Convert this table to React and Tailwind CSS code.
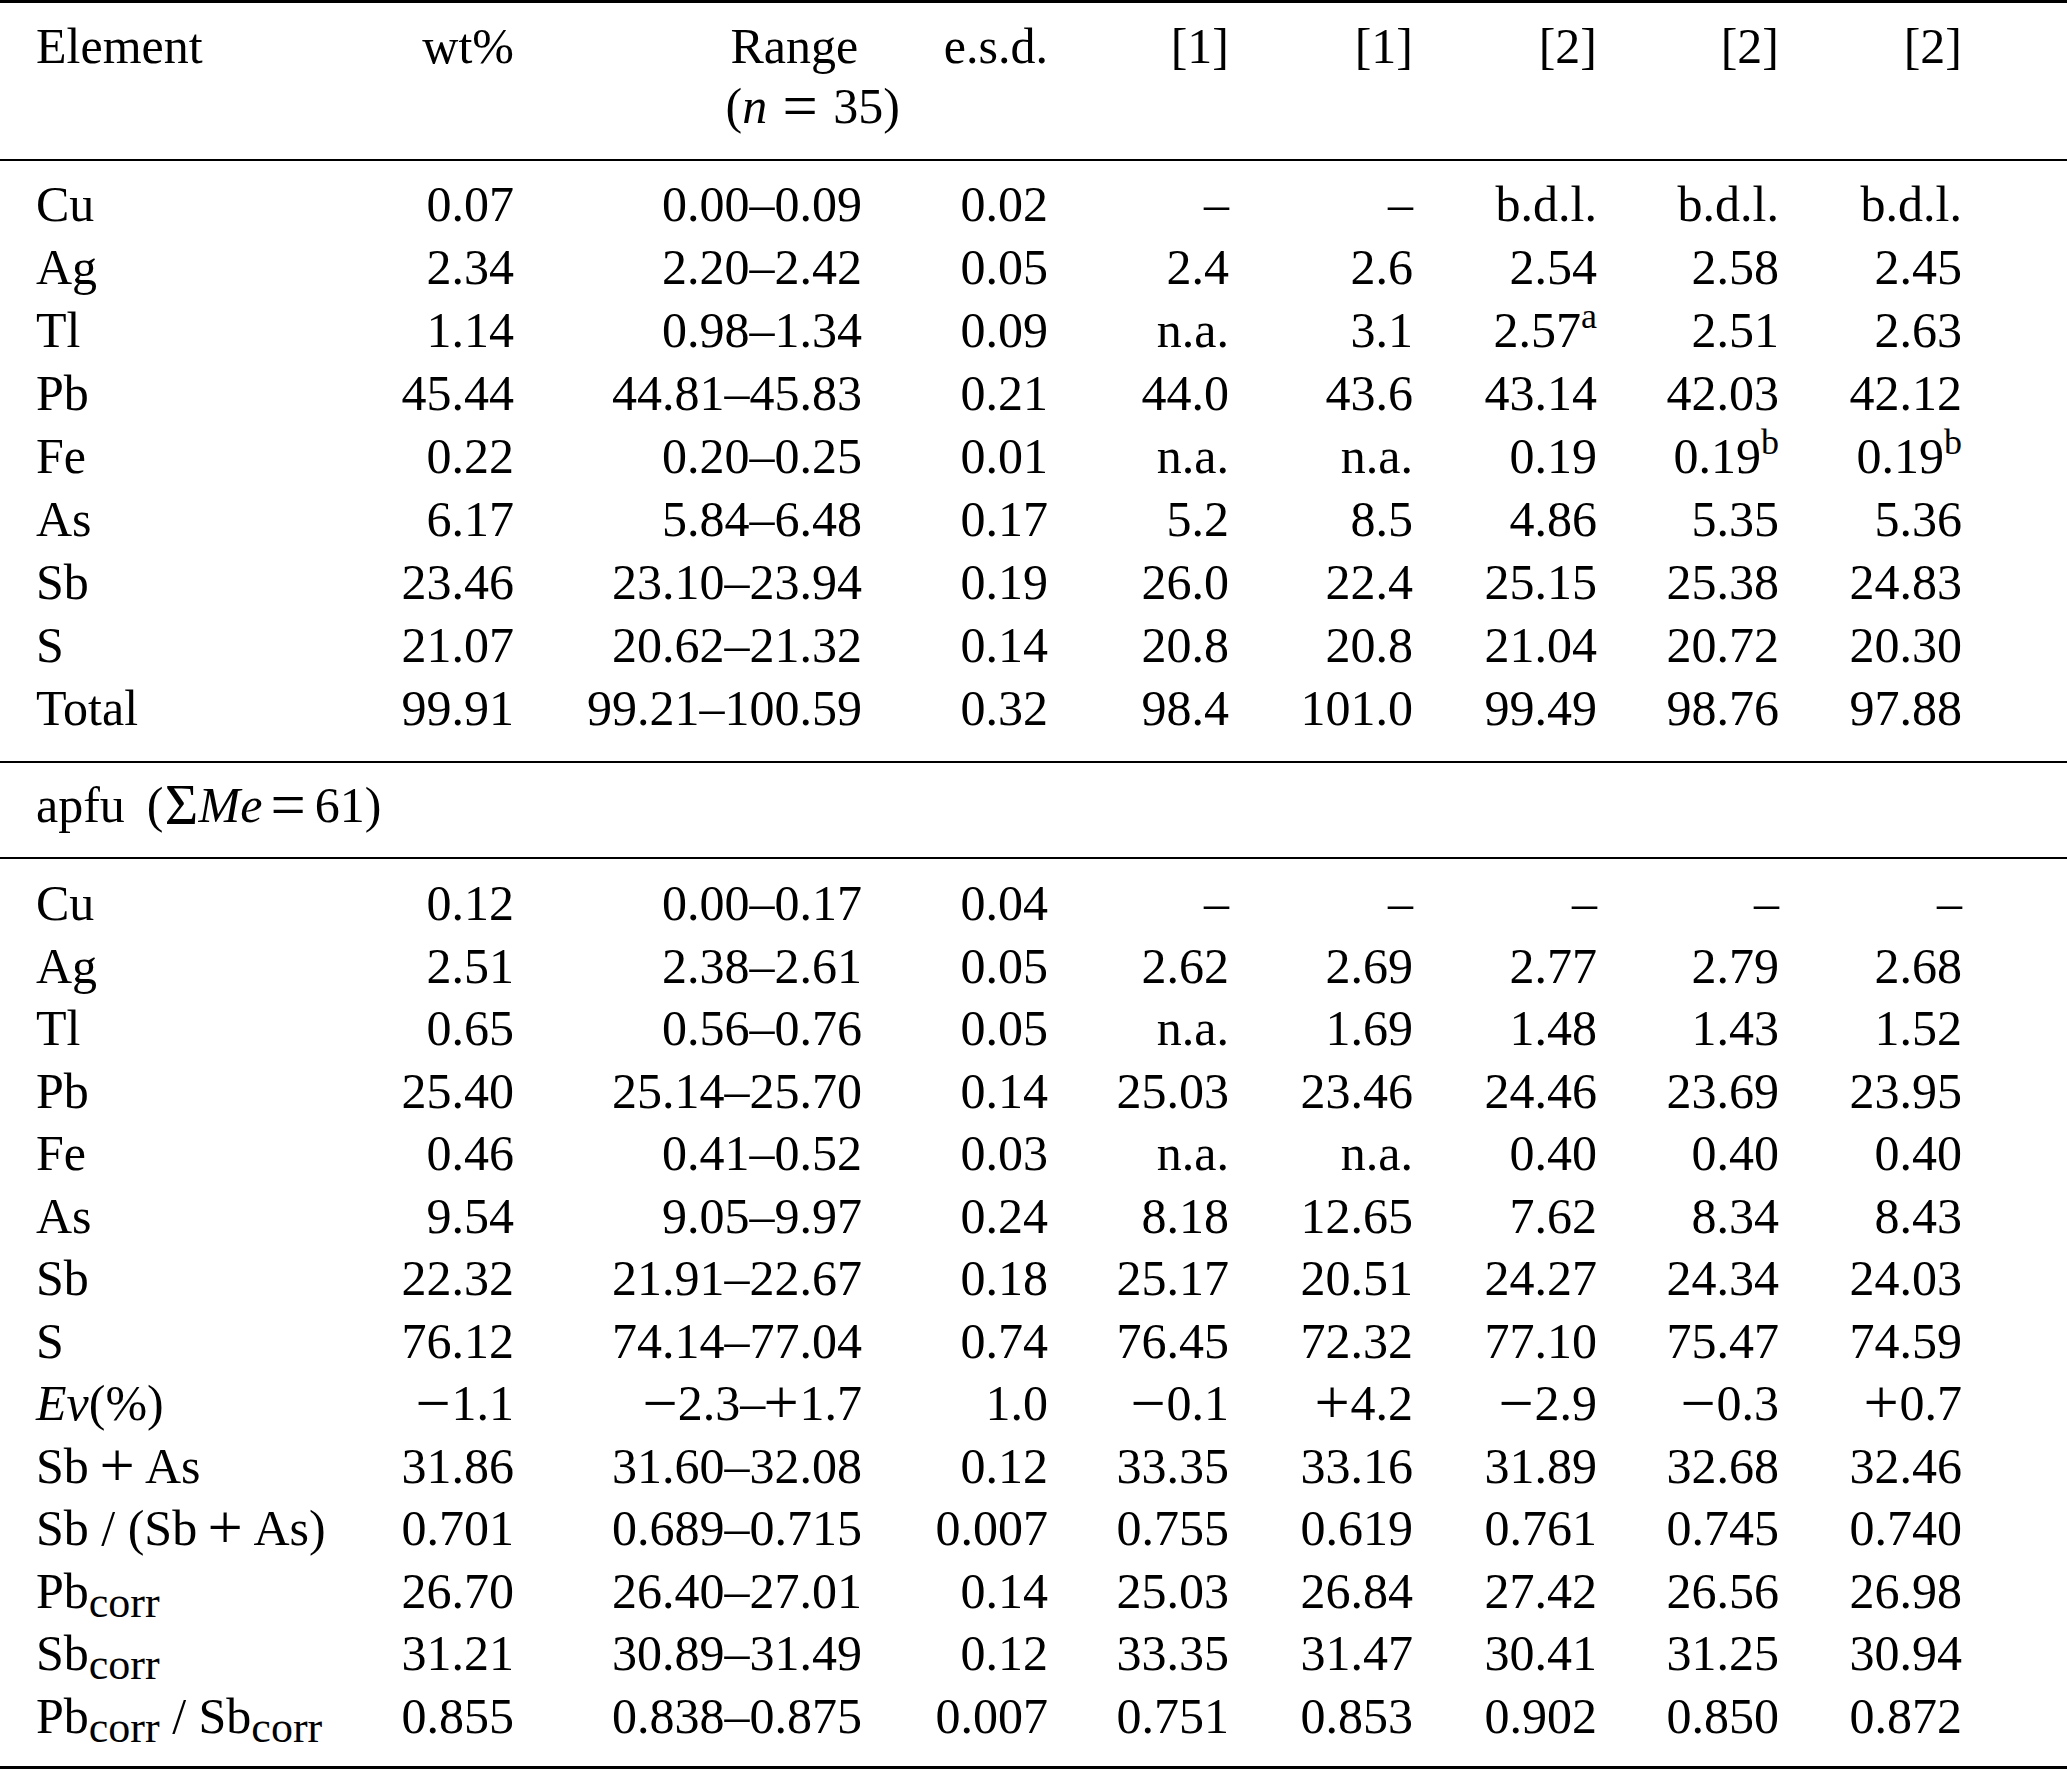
import React from "react";

const cols =
  "grid grid-cols-[330px_184px_348px_186px_181px_184px_184px_182px_183px] whitespace-nowrap";

const Sub = ({ children }) => (
  <sub className="text-[44px] leading-none relative top-[9px] align-baseline">
    {children}
  </sub>
);

const Sup = ({ children }) => (
  <sup className="text-[36px] leading-none relative top-[-19px] align-baseline">
    {children}
  </sup>
);

// math-mode operators are drawn a bit bigger than the text ones
const gaps = {
  unary: "mr-[4px] ml-[2px]",
  bin: "mx-[14px]",
  wide: "mx-[19px]",
  rel: "mx-[12px]",
};
const Op = ({ children, gap = "unary" }) => (
  <span className={`inline-block scale-[1.25] ${gaps[gap]}`}>{children}</span>
);

const Row = ({ label, cells, lh = "leading-[63px]" }) => (
  <div className={`${cols} ${lh}`}>
    <div className="pl-[36px]">{label}</div>
    {cells.map((c, i) => (
      <div key={i} className="text-right">
        {c}
      </div>
    ))}
  </div>
);

const neg = (v) => (
  <>
    <Op>−</Op>
    {v}
  </>
);
const pos = (v) => (
  <>
    <Op>+</Op>
    {v}
  </>
);

const wt = [
  ["Cu", ["0.07", "0.00–0.09", "0.02", "–", "–", "b.d.l.", "b.d.l.", "b.d.l."]],
  ["Ag", ["2.34", "2.20–2.42", "0.05", "2.4", "2.6", "2.54", "2.58", "2.45"]],
  ["Tl", ["1.14", "0.98–1.34", "0.09", "n.a.", "3.1", <>2.57<Sup>a</Sup></>, "2.51", "2.63"]],
  ["Pb", ["45.44", "44.81–45.83", "0.21", "44.0", "43.6", "43.14", "42.03", "42.12"]],
  ["Fe", ["0.22", "0.20–0.25", "0.01", "n.a.", "n.a.", "0.19", <>0.19<Sup>b</Sup></>, <>0.19<Sup>b</Sup></>]],
  ["As", ["6.17", "5.84–6.48", "0.17", "5.2", "8.5", "4.86", "5.35", "5.36"]],
  ["Sb", ["23.46", "23.10–23.94", "0.19", "26.0", "22.4", "25.15", "25.38", "24.83"]],
  ["S", ["21.07", "20.62–21.32", "0.14", "20.8", "20.8", "21.04", "20.72", "20.30"]],
  ["Total", ["99.91", "99.21–100.59", "0.32", "98.4", "101.0", "99.49", "98.76", "97.88"]],
];

const apfu = [
  ["Cu", ["0.12", "0.00–0.17", "0.04", "–", "–", "–", "–", "–"]],
  ["Ag", ["2.51", "2.38–2.61", "0.05", "2.62", "2.69", "2.77", "2.79", "2.68"]],
  ["Tl", ["0.65", "0.56–0.76", "0.05", "n.a.", "1.69", "1.48", "1.43", "1.52"]],
  ["Pb", ["25.40", "25.14–25.70", "0.14", "25.03", "23.46", "24.46", "23.69", "23.95"]],
  ["Fe", ["0.46", "0.41–0.52", "0.03", "n.a.", "n.a.", "0.40", "0.40", "0.40"]],
  ["As", ["9.54", "9.05–9.97", "0.24", "8.18", "12.65", "7.62", "8.34", "8.43"]],
  ["Sb", ["22.32", "21.91–22.67", "0.18", "25.17", "20.51", "24.27", "24.34", "24.03"]],
  ["S", ["76.12", "74.14–77.04", "0.74", "76.45", "72.32", "77.10", "75.47", "74.59"]],
  [
    <>
      <i>Ev</i>(%)
    </>,
    [
      neg("1.1"),
      <>
        <Op>−</Op>2.3–<Op>+</Op>1.7
      </>,
      "1.0",
      neg("0.1"),
      pos("4.2"),
      neg("2.9"),
      neg("0.3"),
      pos("0.7"),
    ],
  ],
  [
    <>
      Sb<Op gap="bin">+</Op>As
    </>,
    ["31.86", "31.60–32.08", "0.12", "33.35", "33.16", "31.89", "32.68", "32.46"],
  ],
  [
    <>
      Sb / (Sb<Op gap="bin">+</Op>As)
    </>,
    ["0.701", "0.689–0.715", "0.007", "0.755", "0.619", "0.761", "0.745", "0.740"],
  ],
  [<>Pb<Sub>corr</Sub></>, ["26.70", "26.40–27.01", "0.14", "25.03", "26.84", "27.42", "26.56", "26.98"]],
  [<>Sb<Sub>corr</Sub></>, ["31.21", "30.89–31.49", "0.12", "33.35", "31.47", "30.41", "31.25", "30.94"]],
  [
    <>
      Pb<Sub>corr</Sub> / Sb<Sub>corr</Sub>
    </>,
    ["0.855", "0.838–0.875", "0.007", "0.751", "0.853", "0.902", "0.850", "0.872"],
  ],
];

export default function App() {
  return (
    <main className="w-full min-h-screen bg-white text-black font-['Liberation_Serif','Times_New_Roman',serif] text-[50px]">
      <div className="h-[3px] bg-black" />

      {/* header */}
      <div className={`${cols} leading-[60px] pt-[13px] pb-[23px]`}>
        <div className="pl-[36px]">Element</div>
        <div className="text-right">wt%</div>
        <div className="text-right">
          <div className="inline-block text-left mr-[-38px]">
            <span className="pl-[5px]">Range</span>
            <br />
            (<i>n</i>
            <Op gap="wide">=</Op>35)
          </div>
        </div>
        <div className="text-right">e.s.d.</div>
        <div className="text-right">[1]</div>
        <div className="text-right">[1]</div>
        <div className="text-right">[2]</div>
        <div className="text-right">[2]</div>
        <div className="text-right">[2]</div>
      </div>
      <div className="h-[2px] bg-black" />

      <section className="pt-[12px] pb-[21px]">
        {wt.map(([label, cells], i) => (
          <Row key={i} label={label} cells={cells} />
        ))}
      </section>
      <div className="h-[2px] bg-black" />

      <div className="pl-[36px] leading-[63px] pt-[11px] pb-[20px]">
        apfu<span className="ml-[22px]">(</span>
        <span className="inline-block scale-[1.15] mx-[3px]">Σ</span>
        <i>Me</i>
        <Op gap="rel">=</Op>61)
      </div>
      <div className="h-[2px] bg-black" />

      <section className="pt-[13px] pb-[19px]">
        {apfu.map(([label, cells], i) => (
          <Row key={i} label={label} cells={cells} lh="leading-[62.5px]" />
        ))}
      </section>
      <div className="h-[3px] bg-black" />
    </main>
  );
}
